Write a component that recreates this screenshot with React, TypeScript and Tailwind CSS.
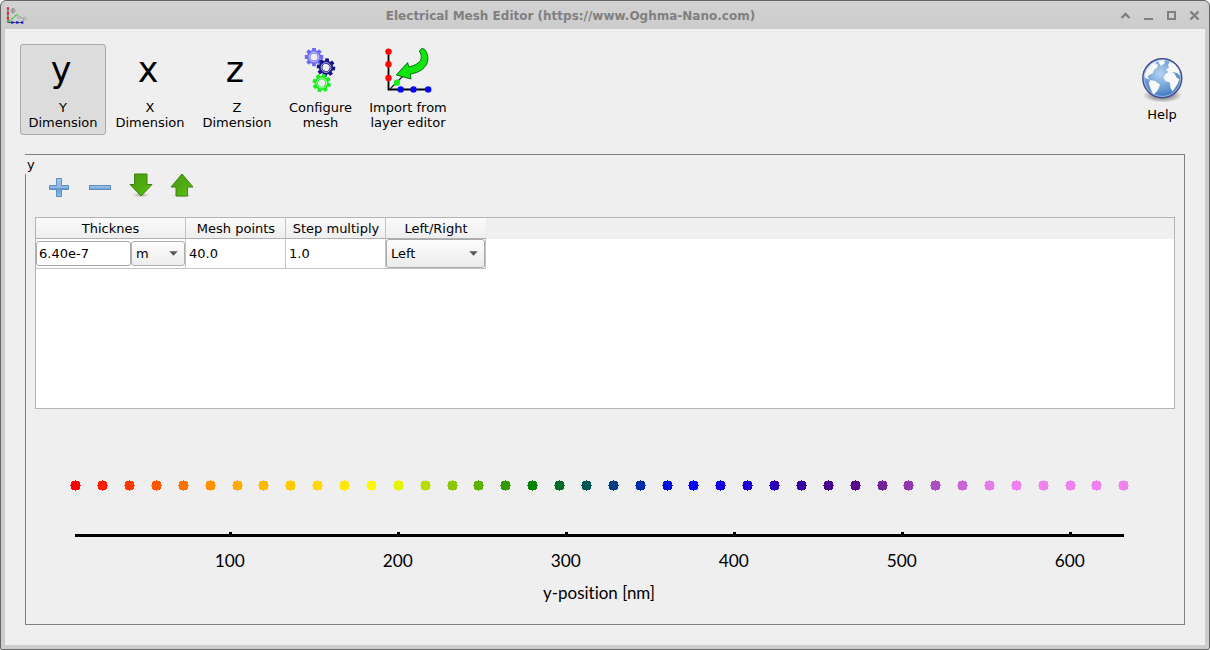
import React from "react";

type RGB = [number, number, number];

const STOPS: RGB[] = [
  [255, 0, 0],
  [255, 165, 0],
  [255, 255, 0],
  [0, 128, 0],
  [0, 0, 255],
  [75, 0, 130],
  [238, 130, 238],
];

function spectrum(i: number): string {
  const t = Math.min((i * 7) / 40, 6);
  const k = Math.min(Math.floor(t), 5);
  const f = t - k;
  const c = STOPS[k].map((v, n) => Math.round(v + (STOPS[k + 1][n] - v) * f));
  return `rgb(${c[0]},${c[1]},${c[2]})`;
}

function AppIcon() {
  return (
    <svg className="h-5 w-[22px] shrink-0" viewBox="0 0 22 20" fill="none">
      <path d="M2 3V17.5H17" stroke="#555" strokeWidth="1.2" />
      <path d="M2.5 17L11.5 9" stroke="#3c3" strokeWidth="1.3" strokeDasharray="3 1" />
      <g fill="#f02020">
        <rect x=".8" y="2.2" width="2.2" height="2.2" />
        <rect x=".8" y="7" width="2.2" height="2.2" />
        <rect x=".8" y="12" width="2.2" height="2.2" />
      </g>
      <g fill="#1010e8">
        <rect x="5" y="16.4" width="2.4" height="2.2" />
        <rect x="10" y="16.4" width="2.4" height="2.2" />
        <rect x="15" y="16.4" width="2.4" height="2.2" />
      </g>
      <ellipse cx="7" cy="5.6" rx="2.1" ry="1.6" stroke="#777" strokeWidth=".8" />
      <path d="M7 3V8.4" stroke="#777" strokeWidth=".8" />
      <path d="M12 8.5V14M14 11.5V14M14 12q2-1 2 2M17.5 16v-3.5q3-1 2.5 1t-2.5 1" stroke="#999" strokeWidth=".8" />
    </svg>
  );
}

function Gear({ x, y, color, spin = 0 }: { x: number; y: number; color: string; spin?: number }) {
  return (
    <g transform={`translate(${x} ${y}) rotate(${spin})`}>
      {[0, 45, 90, 135, 180, 225, 270, 315].map((a) => (
        <rect key={a} x="-1.9" y="-9.2" width="3.8" height="4" rx=".4" fill={color} transform={`rotate(${a})`} />
      ))}
      <circle r="7.1" fill={color} />
      <circle r="4.9" fill="none" stroke="#eeeeee" strokeWidth=".7" />
      <circle r="3.6" fill="#eeeeee" />
    </g>
  );
}

function GearsIcon() {
  return (
    <svg className="h-12 w-12" viewBox="296 48 48 48">
      <Gear x={314} y={57} color="#6b6bf5" />
      <Gear x={326} y={67.5} color="#14148c" spin={8} />
      <Gear x={321.7} y={83} color="#15f01d" spin={16} />
    </svg>
  );
}

function ImportIcon() {
  return (
    <svg className="h-12 w-[52px]" viewBox="382 48 52 48">
      <path d="M388.5 51V89.5H429" fill="none" stroke="#000" strokeWidth="1.8" />
      <path d="M390 89L403 76" stroke="#222" strokeWidth="1.3" />
      <g fill="#ff0505">
        <circle cx="388.5" cy="51.6" r="3.2" />
        <circle cx="388.5" cy="64.3" r="3.2" />
        <circle cx="388.5" cy="78" r="3.2" />
      </g>
      <g fill="#0505ff">
        <circle cx="400.7" cy="89.4" r="3.2" />
        <circle cx="413.5" cy="89.4" r="3.2" />
        <circle cx="428.2" cy="89.4" r="3.2" />
      </g>
      <circle cx="397" cy="82.7" r="3.1" fill="#12f012" />
      <path
        d="M419.3 51Q421.5 47.2 424.5 49.2C431.5 58 428 71.5 410.3 74L411 79L396.3 75L407.6 62.6L408.8 67C419 64.5 424.5 59.5 419.3 51Z"
        fill="#10e510"
        stroke="#08700c"
        strokeWidth="1"
        strokeLinejoin="round"
      />
    </svg>
  );
}

function GlobeIcon() {
  return (
    <svg className="h-12 w-12" viewBox="0 0 48 48">
      <defs>
        <radialGradient id="ocean" cx=".45" cy=".38" r=".65">
          <stop offset="0" stopColor="#b5d1ef" />
          <stop offset=".55" stopColor="#73a3d8" />
          <stop offset="1" stopColor="#376fb8" />
        </radialGradient>
        <radialGradient id="globeShadow">
          <stop offset="0" stopColor="#555" stopOpacity=".8" />
          <stop offset=".6" stopColor="#666" stopOpacity=".5" />
          <stop offset="1" stopColor="#777" stopOpacity="0" />
        </radialGradient>
      </defs>
      <ellipse cx="24.5" cy="39.5" rx="20" ry="7" fill="url(#globeShadow)" />
      <circle cx="24.3" cy="22.2" r="19.5" fill="url(#ocean)" stroke="#474c90" strokeWidth="1.4" />
      <g fill="#f7f8f7">
        <path d="M6.5 19L9 13L14 7.5L20 5L17 8L20 8.5L19 12L16 13.5L15 17L11 19L9.5 21L12 23.5L7 22Z" />
        <path d="M12 24L17 25L22 28.5L20.5 33L17.5 37L15.5 38.5L13 34L11 28Z" />
        <path d="M20 4.5L26 3.7L27 7L23 10L21 7Z" />
        <path d="M30 9L32 5.5L37 8.5L41 14L42.3 20L39 17L35 16L31 16.5L28 14L31 11Z" />
        <path d="M28 17.5L32 15.5L36 17L39 22L41.5 23L39.5 28L37 32L34.5 35.5L32.5 32L32 26.5L27 25L25.5 21Z" />
      </g>
      <circle cx="24.3" cy="22.2" r="18.2" fill="none" stroke="#d3e3f5" strokeOpacity=".65" strokeWidth=".9" />
    </svg>
  );
}

function ToolButton({ icon, lines, className = "" }: { icon: React.ReactNode; lines: string[]; className?: string }) {
  return (
    <button className={`flex h-[91px] shrink-0 flex-col items-center rounded-[3px] border ${className}`}>
      <span className="flex h-[55px] items-center justify-center">{icon}</span>
      {lines.map((l) => (
        <span key={l} className="block h-[15px] whitespace-nowrap leading-[15px]">
          {l}
        </span>
      ))}
    </button>
  );
}

function Letter({ children }: { children: string }) {
  return <span className="-mt-[5px] mr-1 text-[35px] leading-[48px]">{children}</span>;
}

function EditIcons() {
  return (
    <div className="-mt-1 -ml-[10px] flex h-[47px] items-start gap-[17px] pt-[3px] pl-[22px]">
      <svg className="h-6 w-6" viewBox="0 0 24 24">
        <defs>
          <linearGradient id="blueFill" x2="0" y2="1">
            <stop offset="0" stopColor="#a6c6e8" />
            <stop offset=".5" stopColor="#8eb4df" />
            <stop offset=".55" stopColor="#6898cf" />
            <stop offset="1" stopColor="#8fbce9" />
          </linearGradient>
          <linearGradient id="greenFill" x2="1" y2="1">
            <stop offset="0" stopColor="#4f980f" />
            <stop offset=".6" stopColor="#4eae12" />
            <stop offset="1" stopColor="#68cc18" />
          </linearGradient>
          <radialGradient id="arrowShadow">
            <stop offset="0" stopColor="#666" stopOpacity=".6" />
            <stop offset="1" stopColor="#888" stopOpacity="0" />
          </radialGradient>
        </defs>
        <path d="M9.5 5.5H14.5V12.5H21.5V16.5H14.5V23.5H9.5V16.5H2.5V12.5H9.5Z" fill="url(#blueFill)" stroke="#5c8dc5" />
      </svg>
      <svg className="h-6 w-6" viewBox="0 0 24 24">
        <rect x="1.5" y="12.5" width="21" height="4" fill="url(#blueFill)" stroke="#5c8dc5" />
      </svg>
      <svg className="h-6 w-6" viewBox="0 0 24 24">
        <ellipse cx="12" cy="22" rx="9" ry="2.5" fill="url(#arrowShadow)" />
        <path d="M5.5 1H18V11.5H23L12 23L1 11.5H5.5Z" fill="url(#greenFill)" stroke="#3e820c" />
      </svg>
      <svg className="h-6 w-6" viewBox="0 0 24 24">
        <ellipse cx="12" cy="22.5" rx="9" ry="2" fill="url(#arrowShadow)" />
        <path d="M12 1L23 14H17.5V23H6V14H1Z" fill="url(#greenFill)" stroke="#3e820c" />
      </svg>
    </div>
  );
}

function Caret() {
  return (
    <svg className="h-[5px] w-[9px]" viewBox="0 0 9 5">
      <path d="M.3 .3H8.7L4.5 4.8Z" fill="#555" />
    </svg>
  );
}

function MeshTable() {
  return (
    <div className="flex h-[192px] flex-col border border-[#b4b4b4] bg-white">
      <div className="flex h-[21px] shrink-0 bg-[#efefef] text-center leading-[22px]">
        <div className="w-[150px] border-r border-b border-r-[#c4c4c4] border-b-[#b0b0b0] bg-linear-to-b from-[#fbfbfb] to-[#eeeeee]">
          Thicknes
        </div>
        <div className="w-[100px] border-r border-b border-r-[#c4c4c4] border-b-[#b0b0b0] bg-linear-to-b from-[#fbfbfb] to-[#eeeeee]">
          <span className="pl-px">Mesh points</span>
        </div>
        <div className="w-[100px] border-r border-b border-r-[#c4c4c4] border-b-[#b0b0b0] bg-linear-to-b from-[#fbfbfb] to-[#eeeeee]">
          <span className="pl-px">Step multiply</span>
        </div>
        <div className="w-[100px] border-b border-[#b0b0b0] bg-linear-to-b from-[#fbfbfb] to-[#eeeeee]">Left/Right</div>
      </div>
      <div className="flex h-[30px] w-[450px] border-b border-[#c4c4c4]">
        <div className="flex w-[150px] border-r border-[#c4c4c4] py-[2px]">
          <div className="flex w-[95px] items-center rounded-[3px] border border-[#a8a8a8] pl-[2px]">6.40e-7</div>
          <div className="flex w-[54px] items-center justify-between rounded-[3px] border border-[#b0b0b0] bg-linear-to-b from-[#fdfdfd] to-[#ededed] pl-1 pr-[6px]">
            m<Caret />
          </div>
        </div>
        <div className="flex w-[100px] items-center border-r border-[#c4c4c4] pl-[3px]">40.0</div>
        <div className="flex w-[100px] items-center border-r border-[#c4c4c4] pl-[3px]">1.0</div>
        <div className="flex w-[99px] items-center justify-between rounded-[3px] border border-[#aaaaaa] bg-linear-to-b from-[#fdfdfd] to-[#ebebeb] pl-1 pr-[6px]">
          Left
          <Caret />
        </div>
        <div className="w-px bg-[#c4c4c4]" />
      </div>
    </div>
  );
}

function MeshChart() {
  const dots = Array.from({ length: 40 }, (_, i) => Math.floor(i * 26.872 + 0.85) + 75);
  return (
    <svg className="h-[206px] w-full" viewBox="35 409 1140 206">
      <g shapeRendering="crispEdges">
        {dots.map((x, i) => (
          <path
            key={x}
            transform={`translate(${x} 485)`}
            d="M0-5h1v1h3v1h1v3h1v1h-1v3h-1v1h-3v1h-1v-1h-3v-1h-1v-3h-1v-1h1v-3h1v-1h3z"
            fill={spectrum(i)}
          />
        ))}
        <rect x="75" y="534" width="1049" height="3" />
        {[100, 200, 300, 400, 500, 600].map((v, i) => (
          <rect key={v} x={229 + i * 168} y="532" width="3" height="3" />
        ))}
      </g>
      <g
        className="[font-variant-ligatures:none]"
        fontFamily="Lato, sans-serif"
        fontSize="17.3"
        textAnchor="middle"
        fill="#000"
      >
        {[100, 200, 300, 400, 500, 600].map((v, i) => (
          <text key={v} x={229.7 + i * 168} y="567" textLength="30">
            {v}
          </text>
        ))}
        <text x="599" y="599" textLength="112" lengthAdjust="spacingAndGlyphs">
          y-position [nm]
        </text>
      </g>
    </svg>
  );
}

export default function App() {
  return (
    <div className="h-[650px] w-[1210px] bg-white font-['DejaVu_Sans',sans-serif] text-[13px] text-black">
      <div className="flex h-full flex-col rounded-t-[6px] rounded-b-[2px] border border-[#666666] bg-[#cdcdcd] px-1 pb-1">
        <header className="flex h-7 shrink-0 items-center bg-linear-to-b from-[#d2d2d2] to-[#cccccc] pl-px pr-[5px]">
          <AppIcon />
          <h1 className="flex-1 pt-[2px] pr-[7px] text-center text-[12px] font-bold text-[#808080]">
            <span className="whitespace-nowrap">Electrical Mesh Editor (https://www.Oghma-Nano.com)</span>
          </h1>
          <svg className="h-5 w-20 shrink-0" viewBox="1120 5 80 20" fill="none" stroke="#808080" strokeWidth="2.4">
            <path d="M1121.5 18L1125.5 14L1129.5 18" />
            <path d="M1144 19H1153" strokeWidth="2" />
            <rect x="1168" y="12" width="7" height="7" strokeWidth="2" />
            <path d="M1190.5 11.5L1198.5 19.5M1198.5 11.5L1190.5 19.5" />
          </svg>
        </header>
        <main className="flex flex-1 flex-col bg-[#efefef] px-5 pb-5">
          <nav className="-ml-[5px] flex h-[125px] pt-[15px]">
            <ToolButton className="w-[86px] border-[#a9a9a9] bg-[#dcdcdc]" icon={<Letter>y</Letter>} lines={["Y", "Dimension"]} />
            <ToolButton className="ml-px w-[86px] border-transparent" icon={<Letter>x</Letter>} lines={["X", "Dimension"]} />
            <ToolButton className="ml-px w-[86px] border-transparent" icon={<Letter>z</Letter>} lines={["Z", "Dimension"]} />
            <ToolButton
              className="ml-px w-[79px] border-transparent"
              icon={
                <span className="-mt-[2px] mr-px">
                  <GearsIcon />
                </span>
              }
              lines={["Configure", "mesh"]}
            />
            <ToolButton
              className="ml-[2px] w-[92px] border-transparent"
              icon={
                <span className="-mt-[2px]">
                  <ImportIcon />
                </span>
              }
              lines={["Import from", "layer editor"]}
            />
            <ToolButton className="mt-[7px] -mr-[1px] ml-auto w-12 border-transparent" icon={<GlobeIcon />} lines={["Help"]} />
          </nav>
          <section className="flex flex-1 flex-col border border-[#808080] px-[9px]">
            <div className="-ml-[10px] h-[19px] w-3 bg-[#efefef] pl-[2px] leading-5">y</div>
            <EditIcons />
            <MeshTable />
            <MeshChart />
          </section>
        </main>
      </div>
    </div>
  );
}
